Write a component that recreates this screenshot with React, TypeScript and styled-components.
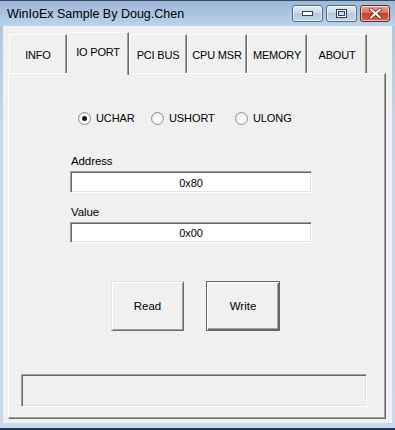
import React, { useState } from 'react';
import styled, { createGlobalStyle, css } from 'styled-components';

const GlobalStyle = createGlobalStyle`
    html, body {
        margin: 0;
        padding: 0;
        background: #ffffff;
    }
    * {
        box-sizing: border-box;
    }
`;

const uiFont = `"Liberation Sans", Arial, sans-serif`;

const Window = styled.div`
    width: 395px;
    height: 430px;
    display: flex;
    flex-direction: column;
    background: linear-gradient(to bottom, #a9c4e0 0%, #c2d8ee 30%, #c6dbf0 100%);
    border-top: 1px solid #3a4b5e;
    border-bottom: 2px solid #1c3552;
    font-family: ${uiFont};
    overflow: hidden;
`;

const TitleBar = styled.div`
    height: 25px;
    flex: none;
    display: flex;
    align-items: center;
    justify-content: space-between;
    padding: 0 5px 2px 7px;
    background: linear-gradient(to bottom, #9db9d8 0%, #aac5e2 50%, #bcd3ec 100%);
`;

const Title = styled.span`
    font-family: ${uiFont};
    font-size: 12.5px;
    color: #000;
    margin-top: 2px;
`;

const Caption = styled.div`
    display: flex;
    gap: 3px;
    align-self: flex-start;
    margin-top: 4px;
`;

const CaptionButton = styled.div<{ $close?: boolean }>`
    width: 31px;
    height: 17px;
    border-radius: 3px;
    border: 1px solid #4f6a88;
    display: flex;
    align-items: center;
    justify-content: center;
    background: linear-gradient(to bottom, #e3ebf5 0%, #cbd9e9 45%, #b5c8de 50%, #c6d6e8 100%);
    box-shadow: inset 0 0 0 1px rgba(255, 255, 255, 0.6);
    ${(p) =>
        p.$close &&
        css`
            width: 30px;
            border-color: #6e2720;
            background: linear-gradient(to bottom, #e8a293 0%, #d8725f 45%, #c2432c 50%, #d26650 100%);
        `}
`;

const Client = styled.div`
    flex: 1;
    margin: 0 3px 5px 3px;
    background: #f0f0f0;
    padding: 6px 0 0 5px;
    display: flex;
    flex-direction: column;
`;

const TabRow = styled.div`
    display: flex;
    align-items: flex-end;
    height: 43px;
    padding-left: 1px;
    position: relative;
    z-index: 1;
`;

const Tab = styled.div<{ $active?: boolean; $w: number }>`
    width: ${(p) => p.$w}px;
    height: 39px;
    margin-bottom: 2px;
    padding-top: 2px;
    display: flex;
    align-items: center;
    justify-content: center;
    font-size: 11px;
    letter-spacing: -0.2px;
    color: #000;
    background: #f0f0f0;
    border-top: 1px solid #ffffff;
    border-left: 1px solid #ffffff;
    border-right: 1px solid #696969;
    box-shadow: inset -1px 0 0 #a0a0a0;
    ${(p) =>
        p.$active &&
        css`
            height: 43px;
            margin-bottom: 0;
            padding-top: 0;
            padding-bottom: 4px;
        `}
`;

const Panel = styled.div`
    width: 378px;
    height: 346px;
    margin-top: -2px;
    background: #f0f0f0;
    border-top: 1px solid #ffffff;
    border-left: 1px solid #ffffff;
    border-right: 1px solid #696969;
    border-bottom: 1px solid #696969;
    box-shadow: inset -1px -1px 0 #a0a0a0;
    display: flex;
    flex-direction: column;
    padding: 36px 0 0 0;
    font-size: 11px;
    letter-spacing: -0.1px;
    color: #000;
`;

const RadioRow = styled.div`
    display: flex;
    align-items: center;
    height: 16px;
    padding-left: 69px;
`;

const RadioItem = styled.label<{ $w: number }>`
    width: ${(p) => p.$w}px;
    display: flex;
    align-items: center;
    gap: 5px;
    cursor: default;
`;

const RadioCircle = styled.span<{ $on?: boolean }>`
    width: 13px;
    height: 13px;
    border-radius: 50%;
    border: 1px solid #8e8f8f;
    background: radial-gradient(circle at 60% 60%, #ffffff 0%, #f4f4f4 55%, #d8d8d8 100%);
    display: flex;
    align-items: center;
    justify-content: center;
    &::after {
        content: '';
        width: 5px;
        height: 5px;
        border-radius: 50%;
        background: ${(p) => (p.$on ? '#1a1a1a' : 'transparent')};
    }
`;

const Field = styled.div<{ $top: number }>`
    margin-top: ${(p) => p.$top}px;
    padding-left: 61px;
    display: flex;
    flex-direction: column;
`;

const FieldLabel = styled.div`
    padding-left: 1px;
    height: 15px;
    line-height: 15px;
    margin-bottom: 2px;
    font-size: 11.5px;
`;

const TextBox = styled.div<{ $h: number }>`
    width: 242px;
    height: ${(p) => p.$h}px;
    background: #ffffff;
    border-top: 1px solid #a0a0a0;
    border-left: 1px solid #a0a0a0;
    border-right: 1px solid #ffffff;
    border-bottom: 1px solid #ffffff;
    box-shadow: inset 1px 1px 0 #696969, inset -1px -1px 0 #e3e3e3;
    display: flex;
    align-items: center;
    justify-content: center;
    padding-top: 1px;
`;

const ButtonRow = styled.div`
    display: flex;
    gap: 22px;
    padding-left: 102px;
    margin-top: 38px;
`;

const Button = styled.button<{ $default?: boolean; $w: number }>`
    width: ${(p) => p.$w}px;
    height: 50px;
    background: #f0f0f0;
    font-family: ${uiFont};
    font-size: 11.5px;
    color: #000;
    padding: 0;
    border-top: 1px solid #e3e3e3;
    border-left: 1px solid #e3e3e3;
    border-right: 1px solid #696969;
    border-bottom: 1px solid #696969;
    box-shadow: inset 1px 1px 0 #ffffff, inset -1px -1px 0 #a0a0a0;
    ${(p) =>
        p.$default &&
        css`
            border: 1px solid #646464;
            box-shadow: inset 1px 1px 0 #ffffff, inset -1px -1px 0 #696969, inset -2px -2px 0 #a0a0a0;
        `}
`;

const StatusBox = styled.div`
    width: 346px;
    height: 33px;
    margin: 43px 0 0 12px;
    border-top: 1px solid #a0a0a0;
    border-left: 1px solid #a0a0a0;
    border-right: 1px solid #ffffff;
    border-bottom: 1px solid #ffffff;
    box-shadow: inset 1px 1px 0 #696969, inset -1px -1px 0 #e3e3e3;
`;

const tabs = [
    { label: 'INFO', w: 58 },
    { label: 'IO PORT', w: 62 },
    { label: 'PCI BUS', w: 58 },
    { label: 'CPU MSR', w: 60 },
    { label: 'MEMORY', w: 60 },
    { label: 'ABOUT', w: 60 },
];

const radios = [
    { label: 'UCHAR', w: 73 },
    { label: 'USHORT', w: 84 },
    { label: 'ULONG', w: 70 },
];

const App: React.FC = () => {
    const [active, setActive] = useState(1);
    const [width, setWidth] = useState(0);

    return (
        <>
            <GlobalStyle />
            <Window>
                <TitleBar>
                    <Title>WinIoEx Sample By Doug.Chen</Title>
                    <Caption>
                        <CaptionButton>
                            <svg width="11" height="5" viewBox="0 0 11 5">
                                <rect x="0.5" y="0.5" width="10" height="4" fill="#fff" stroke="#2d3f55" />
                            </svg>
                        </CaptionButton>
                        <CaptionButton>
                            <svg width="11" height="9" viewBox="0 0 11 9">
                                <rect x="0.5" y="0.5" width="10" height="8" fill="#fff" stroke="#2d3f55" />
                                <rect x="2.5" y="2.5" width="6" height="4" fill="#cbd9e9" stroke="#2d3f55" />
                            </svg>
                        </CaptionButton>
                        <CaptionButton $close>
                            <svg width="13" height="11" viewBox="0 0 13 11">
                                <path
                                    d="M2 1.5 L11 9.5 M11 1.5 L2 9.5"
                                    stroke="#5a1a12"
                                    strokeWidth="3.6"
                                    strokeLinecap="round"
                                />
                                <path
                                    d="M2 1.5 L11 9.5 M11 1.5 L2 9.5"
                                    stroke="#ffffff"
                                    strokeWidth="2.2"
                                    strokeLinecap="round"
                                />
                            </svg>
                        </CaptionButton>
                    </Caption>
                </TitleBar>
                <Client>
                    <TabRow>
                        {tabs.map((t, i) => (
                            <Tab key={t.label} $w={t.w} $active={i === active} onClick={() => setActive(i)}>
                                {t.label}
                            </Tab>
                        ))}
                    </TabRow>
                    <Panel>
                        <RadioRow>
                            {radios.map((r, i) => (
                                <RadioItem key={r.label} $w={r.w} onClick={() => setWidth(i)}>
                                    <RadioCircle $on={i === width} />
                                    {r.label}
                                </RadioItem>
                            ))}
                        </RadioRow>
                        <Field $top={28}>
                            <FieldLabel>Address</FieldLabel>
                            <TextBox $h={22}>0x80</TextBox>
                        </Field>
                        <Field $top={12}>
                            <FieldLabel>Value</FieldLabel>
                            <TextBox $h={21}>0x00</TextBox>
                        </Field>
                        <ButtonRow>
                            <Button $w={73}>Read</Button>
                            <Button $w={74} $default>
                                Write
                            </Button>
                        </ButtonRow>
                        <StatusBox />
                    </Panel>
                </Client>
            </Window>
        </>
    );
};

export default App;
